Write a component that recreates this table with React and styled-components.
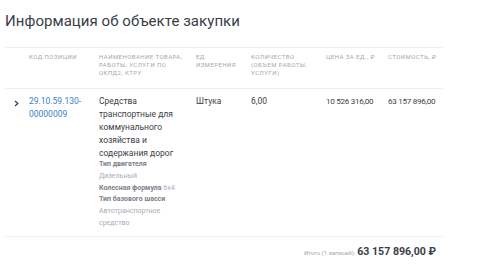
import styled, { createGlobalStyle } from "styled-components";

const GlobalStyle = createGlobalStyle`
    body {
        margin: 0;
        background: #ffffff;
        font-family: Roboto, "Noto Sans", sans-serif;
        color: #3b3f48;
    }
`;

const Container = styled.div`
    width: 486px;
    height: 266px;
    padding: 10px 43px 0 5px;
    box-sizing: border-box;
`;

const Title = styled.h1`
    margin: 0;
    font-size: 15px;
    font-weight: 400;
    line-height: 22px;
    letter-spacing: 0.05px;
    color: #3a3e47;
`;

const Table = styled.div`
    margin-top: 15px;
    border-top: 1px solid #eceef1;
`;

const Row = styled.div`
    display: grid;
    grid-template-columns: 24px 70px 97px 55px 75px 62px 1fr;
    border-bottom: 1px solid #eceef1;
    padding: ${(p) => (p.$head ? "5px 0 11px" : "6px 0 6px")};
`;

const HeadCell = styled.div`
    font-size: 6px;
    line-height: 8px;
    text-transform: uppercase;
    letter-spacing: 0.45px;
    color: #a3a8b1;
    padding-right: ${(p) => (p.$last ? "0" : "12px")};
    white-space: ${(p) => (p.$last ? "nowrap" : "normal")};
`;

const Cell = styled.div`
    font-size: ${(p) => (p.$num ? "8.1px" : "8.5px")};
    letter-spacing: ${(p) => (p.$num ? "-0.3px" : "0")};
    line-height: 13px;
    color: ${(p) => (p.$link ? "#3a80c4" : "#3b3f48")};
    padding-right: 4px;
    white-space: ${(p) => (p.$num ? "nowrap" : "normal")};
`;

const Toggle = styled.div`
    display: flex;
    justify-content: flex-end;
    padding: 5px 10px 0 0;
`;

const Attrs = styled.div`
    margin-top: -1px;
    font-size: 7px;
    line-height: 11.8px;
`;

const AttrName = styled.span`
    font-weight: 700;
    color: #7b818c;
`;

const AttrValue = styled.span`
    color: #a8adb6;
`;

const Footer = styled.div`
    display: flex;
    justify-content: flex-end;
    align-items: baseline;
    gap: 2px;
    padding: 8px 7px 0 0;
`;

const TotalLabel = styled.span`
    font-size: 6px;
    color: #a3a8b1;
`;

const TotalValue = styled.span`
    font-size: 10.6px;
    font-weight: 700;
    color: #3a3e47;
`;

const Chevron = () => (
    <svg width="5" height="7" viewBox="0 0 5 7">
        <path d="M1 1 L3.8 3.5 L1 6" fill="none" stroke="#3b3f48" strokeWidth="1.3" />
    </svg>
);

const App = () => {
    return (
        <Container>
            <GlobalStyle />
            <Title>Информация об объекте закупки</Title>
            <Table>
                <Row $head>
                    <div />
                    <HeadCell>Код позиции</HeadCell>
                    <HeadCell>Наименование товара, работы, услуги по ОКПД2, КТРУ</HeadCell>
                    <HeadCell>Ед. измерения</HeadCell>
                    <HeadCell>Количество (объем работы, услуги)</HeadCell>
                    <HeadCell>Цена за ед., ₽</HeadCell>
                    <HeadCell $last>Стоимость, ₽</HeadCell>
                </Row>
                <Row>
                    <Toggle>
                        <Chevron />
                    </Toggle>
                    <Cell $link>29.10.59.130-<br />00000009</Cell>
                    <Cell>
                        Средства транспортные для коммунального хозяйства и содержания дорог
                        <Attrs>
                            <div><AttrName>Тип двигателя</AttrName></div>
                            <div><AttrValue>Дизельный</AttrValue></div>
                            <div><AttrName>Колесная формула</AttrName> <AttrValue>6х4</AttrValue></div>
                            <div><AttrName>Тип базового шасси</AttrName></div>
                            <div><AttrValue>Автотранспортное средство</AttrValue></div>
                        </Attrs>
                    </Cell>
                    <Cell>Штука</Cell>
                    <Cell>6,00</Cell>
                    <Cell $num>10 526 316,00</Cell>
                    <Cell $num>63 157 896,00</Cell>
                </Row>
            </Table>
            <Footer>
                <TotalLabel>Итого (1 записей):</TotalLabel>
                <TotalValue>63 157 896,00 ₽</TotalValue>
            </Footer>
        </Container>
    );
};

export default App;
